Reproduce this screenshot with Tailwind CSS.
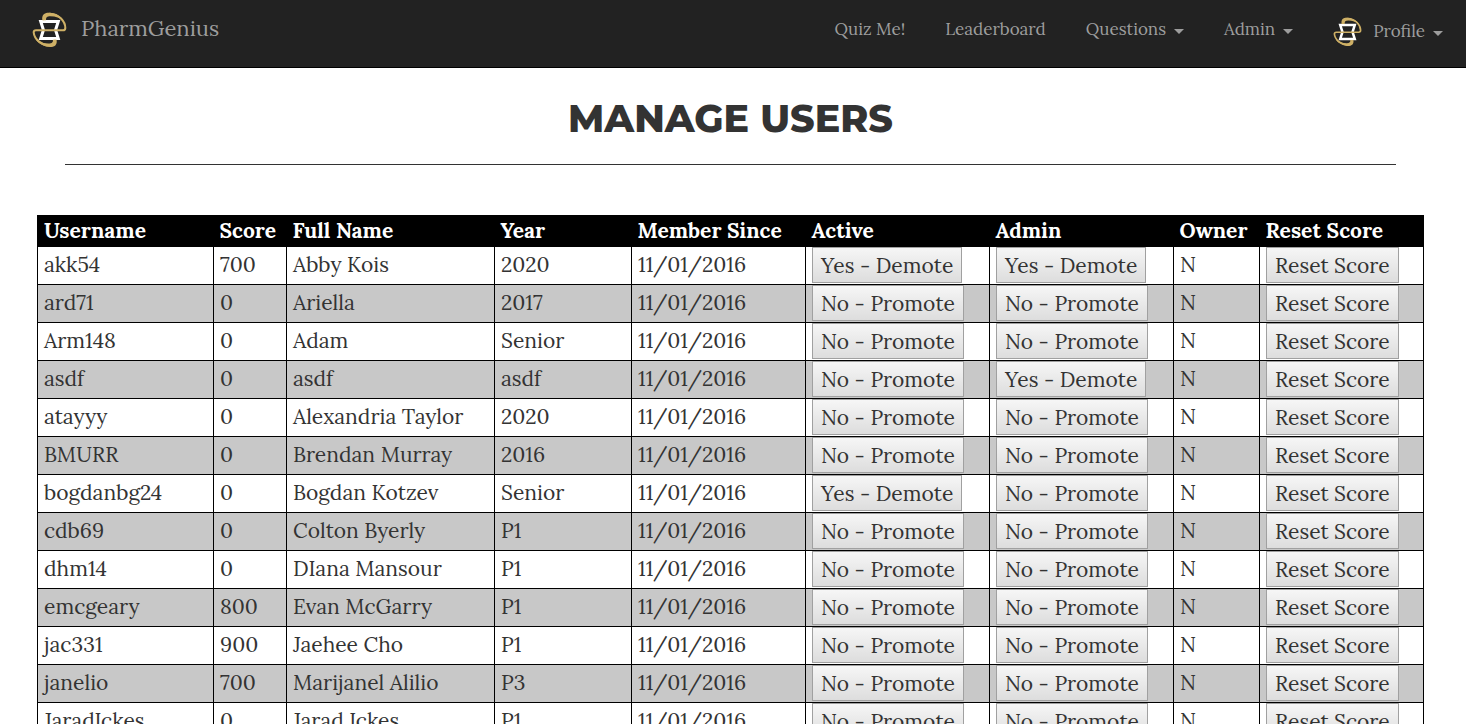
<!DOCTYPE html>
<html lang="en">
<head>
<meta charset="utf-8">
<meta name="viewport" content="width=device-width, initial-scale=1">
<title>Manage Users - PharmGenius</title>
<script src="https://cdn.jsdelivr.net/npm/@tailwindcss/browser@4"></script>
</head>
<body class="bg-white text-[#333333] font-[Lora,'Liberation_Serif',serif]">
<svg class="hidden" aria-hidden="true">
  <symbol id="logo" viewBox="0 0 104 106">
    <path d="M26 28h52l-8 25 8 25H26l8-25z" fill="none" stroke="#fff" stroke-width="9"/>
    <path d="M35 24C33 9 42 5 53 5C80 6 99 27 99 47Q99 54 92 54H12Q5 54 5 60C7 82 30 98 51 100Q67 102 69 82" fill="none" stroke="#ceb066" stroke-width="6"/>
    <path d="M31 24C28 6 38 1 53 2C70 3 86 13 94 25C83 17 70 12 55 12C44 12 41 16 42 24ZM73 82C76 98 66 105 51 103C34 101 18 92 10 81C22 89 34 93 49 93C60 93 63 90 62 82Z" fill="#ceb066"/>
  </symbol>
</svg>

<header class="border-b border-black bg-[#222222] text-[#9d9d9d]">
  <nav class="flex h-[67px] items-start justify-between pr-[23px] pl-8" aria-label="Main">
    <a href="#" class="flex items-start gap-3.5 pt-3 text-[22px] leading-8">
      <svg class="h-9 w-[35px]" aria-hidden="true"><use href="#logo"/></svg>
      <span>PharmGenius</span>
    </a>
    <ul class="flex items-start gap-10 pt-[17px] text-[17px] leading-6">
      <li><a href="#">Quiz Me!</a></li>
      <li><a href="#">Leaderboard</a></li>
      <li><button type="button" class="flex items-center gap-2">Questions
        <svg class="mt-1 h-[5px] w-2.5 fill-current" viewBox="0 0 10 5" aria-hidden="true"><path d="M0 0h10L5 5z"/></svg></button></li>
      <li><button type="button" class="flex items-center gap-2">Admin
        <svg class="mt-1 h-[5px] w-2.5 fill-current" viewBox="0 0 10 5" aria-hidden="true"><path d="M0 0h10L5 5z"/></svg></button></li>
      <li><button type="button" class="flex h-7 items-center gap-2">
        <svg class="mt-0.5 mr-[3px] h-[30px] w-[29px]" aria-hidden="true"><use href="#logo"/></svg>Profile
        <svg class="mt-1 h-[5px] w-2.5 fill-current" viewBox="0 0 10 5" aria-hidden="true"><path d="M0 0h10L5 5z"/></svg></button></li>
    </ul>
  </nav>
</header>

<main class="pr-[42px] pb-10 pl-[37px]">
  <h1 class="mx-7 border-b border-[#333333] pt-[26px] pb-[21px] text-center font-[Montserrat,Inter,sans-serif] text-[38px] leading-[49px] font-extrabold">MANAGE USERS</h1>

  <table class="mt-[50px] w-full table-fixed border-collapse text-left text-[21px] leading-[30px] [&_td]:h-[38px] [&_td]:border [&_td]:border-black [&_td]:px-1.5 [&_td]:py-0 [&_td]:align-top [&_td]:whitespace-nowrap [&_th]:h-[31px] [&_th]:px-1.5 [&_th]:py-0 [&_th]:whitespace-nowrap [&_button]:block [&_button]:h-9 [&_button]:border [&_button]:border-[#a0a0a0] [&_button]:bg-linear-to-b [&_button]:from-[#f6f6f6] [&_button]:to-[#dddddd] [&_button]:px-2 [&_button]:pt-0.5 [&_button]:text-[#333333]">
    <colgroup>
      <col class="w-[176px]"><col class="w-[73px]"><col class="w-[208px]"><col class="w-[137px]"><col class="w-[174px]"><col class="w-[184px]"><col class="w-[184px]"><col class="w-[86px]"><col class="w-[164px]">
    </colgroup>
    <thead class="border border-black bg-black text-white">
      <tr><th scope="col">Username</th><th scope="col">Score</th><th scope="col">Full Name</th><th scope="col">Year</th><th scope="col">Member Since</th><th scope="col">Active</th><th scope="col">Admin</th><th scope="col">Owner</th><th scope="col">Reset Score</th></tr>
    </thead>
    <tbody id="users" class="[&>tr:nth-child(even)]:bg-[#c8c8c8] [&_td]:pt-[3px] [&_td:has(button)]:pt-0"></tbody>
  </table>
</main>

<script>
  // username, score, full name, year, active, admin
  const users = [
    ["akk54", 700, "Abby Kois", "2020", true, true],
    ["ard71", 0, "Ariella", "2017", false, false],
    ["Arm148", 0, "Adam", "Senior", false, false],
    ["asdf", 0, "asdf", "asdf", false, true],
    ["atayyy", 0, "Alexandria Taylor", "2020", false, false],
    ["BMURR", 0, "Brendan Murray", "2016", false, false],
    ["bogdanbg24", 0, "Bogdan Kotzev", "Senior", true, false],
    ["cdb69", 0, "Colton Byerly", "P1", false, false],
    ["dhm14", 0, "DIana Mansour", "P1", false, false],
    ["emcgeary", 800, "Evan McGarry", "P1", false, false],
    ["jac331", 900, "Jaehee Cho", "P1", false, false],
    ["janelio", 700, "Marijanel Alilio", "P3", false, false],
    ["JaradIckes", 0, "Jarad Ickes", "P1", false, false],
  ];
  const toggle = on => `<button type="button">${on ? "Yes - Demote" : "No - Promote"}</button>`;
  document.getElementById("users").innerHTML = users.map(([username, score, name, year, active, admin]) =>
    `<tr><td>${username}</td><td>${score}</td><td>${name}</td><td>${year}</td><td>11/01/2016</td>` +
    `<td>${toggle(active)}</td><td>${toggle(admin)}</td><td>N</td>` +
    `<td><button type="button">Reset Score</button></td></tr>`).join("");
</script>
</body>
</html>
